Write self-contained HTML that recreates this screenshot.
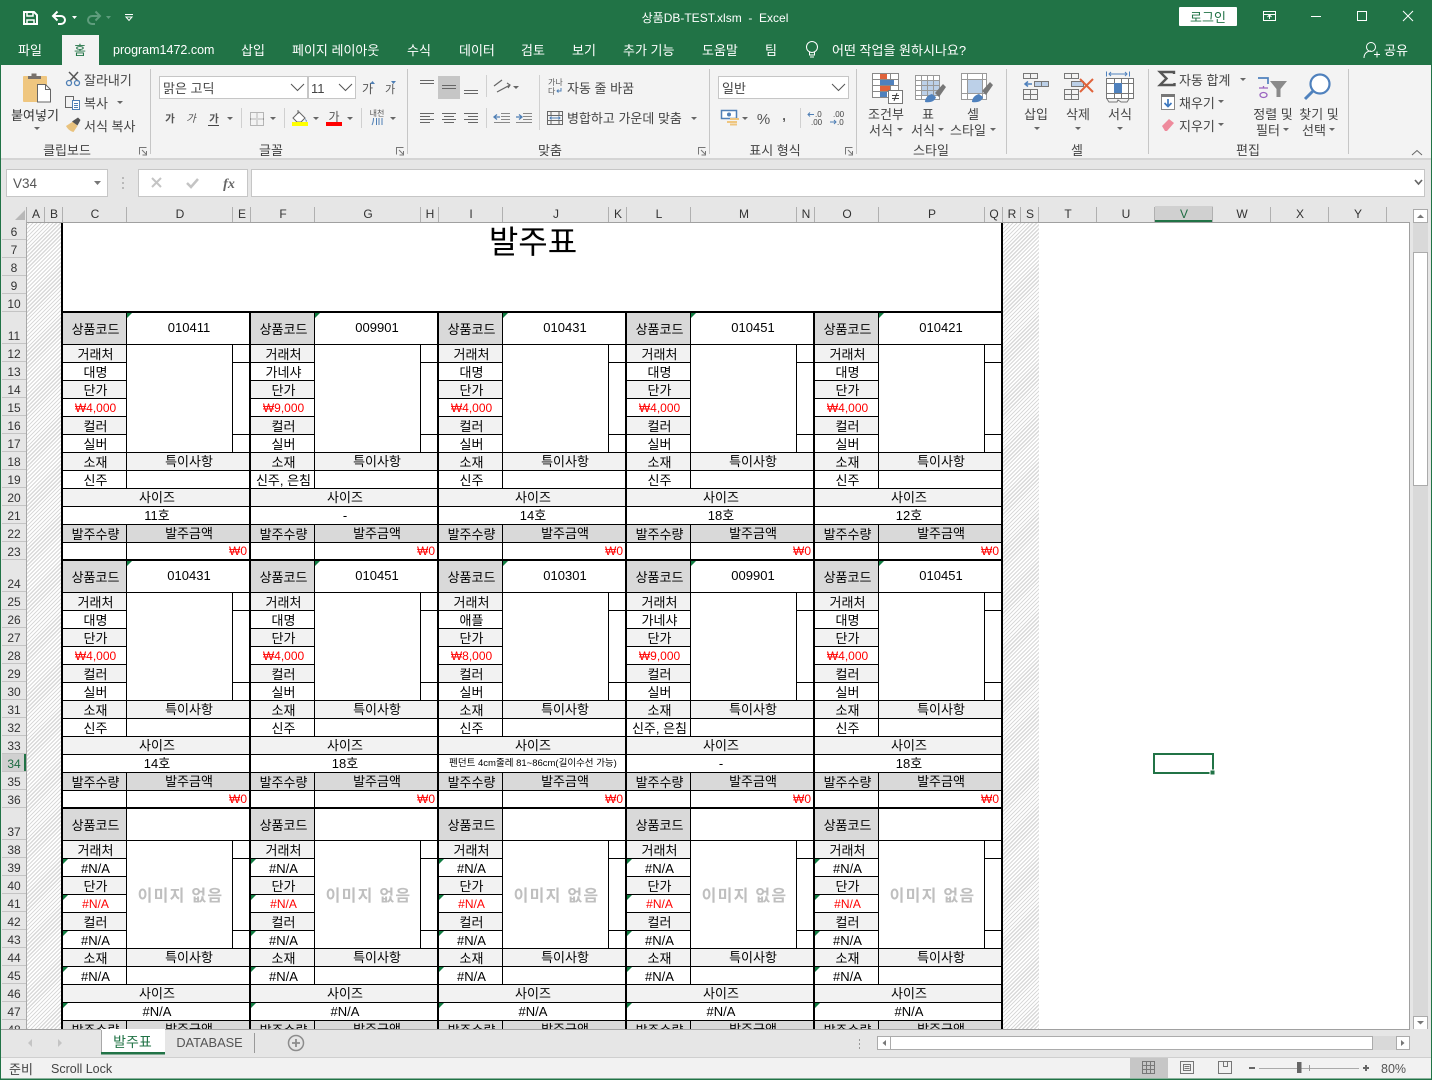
<!DOCTYPE html>
<html lang="ko"><head><meta charset="utf-8"><title>상품DB-TEST.xlsm - Excel</title>
<style>
html,body{margin:0;padding:0;width:1432px;height:1080px;overflow:hidden;background:#e6e6e6}
body,svg{font:13px "Liberation Sans","Noto Sans CJK KR",sans-serif}
#s{position:absolute;left:27px;top:222px;width:1383px;height:807px;overflow:hidden;background:#fff;color:#000}
.h{position:absolute;top:0;height:807px;background:repeating-linear-gradient(135deg,#fff 0,#fff 1.6px,#d9d9d9 1.6px,#d9d9d9 2.8px)}
.v{position:absolute;top:0;width:2px;background:#000}
#ti{position:absolute;left:386px;width:240px;top:1px;text-align:center;font-size:32px;line-height:38px}
.k{position:absolute;width:188px;height:248px;box-sizing:border-box;border-left:2px solid #000;border-top:2px solid #000;display:grid;grid-template-columns:64px 106px 16px;grid-template-rows:32px repeat(11,18px) 16px}
.k b{display:block;font-weight:normal;font-size:13px;background:#fff;border-right:1px solid #000;border-bottom:1px solid #000;text-align:center;line-height:20px;overflow:hidden;white-space:nowrap;position:relative;padding-left:2px}
.k b:nth-child(1){background:#d9d9d9;line-height:33px}
.k b:nth-child(2){grid-column:span 2;line-height:29px;border-right:0}
.k b:nth-child(3),.k b:nth-child(8),.k b:nth-child(10),.k b:nth-child(13){background:#f2f2f2}
.k b:nth-child(4){grid-row:span 6;line-height:112px;color:#bfbfbf;font-size:16px;letter-spacing:1.3px;font-weight:bold}
.k b:nth-child(5),.k b:nth-child(7),.k b:nth-child(12){border-right:0}
.k b:nth-child(7){grid-row:span 4}
.k b:nth-child(9){color:#f00;font-size:12px;line-height:18px}
.k b:nth-child(14){grid-column:span 2;background:#f2f2f2;border-right:0;line-height:18px}
.k b:nth-child(16){grid-column:span 2;border-right:0}
.k b:nth-child(17){grid-column:span 3;background:#f2f2f2;border-right:0;line-height:18px}
.k b:nth-child(18){grid-column:span 3;border-right:0;line-height:18px}
.k b:nth-child(19){background:#d9d9d9}
.k b:nth-child(20){grid-column:span 2;background:#d9d9d9;border-right:0;line-height:18px}
.k b:nth-child(21){border-bottom:0}
.k b:nth-child(22){grid-column:span 2;border:0;color:#f00;text-align:right;padding:0 2px 0 0;font-size:12px;line-height:16px}
.k b:nth-child(2)::before,.n b:nth-child(6)::before,.n b:nth-child(9)::before,.n b:nth-child(11)::before,.n b:nth-child(15)::before,.n b:nth-child(18)::before{content:"";position:absolute;left:0;top:0;border-top:5px solid #107c41;border-right:5px solid transparent}
.n b:nth-child(2)::before{display:none}
.k b.p{font-size:9.5px}
#c{position:absolute;left:0;top:0;pointer-events:none}
</style></head><body>
<div id="s">
<div class="h" style="left:0;width:34px"></div>
<div class="h" style="left:976px;width:36px"></div>
<div class="v" style="left:34px;height:91px"></div>
<div class="v" style="left:974px;height:807px"></div>
<div id="ti">발주표</div>

<div class="k" style="left:34px;top:89px"><b>상품코드</b><b>010411</b><b>거래처</b><b></b><b></b><b>대명</b><b></b><b>단가</b><b>₩4,000</b><b>컬러</b><b>실버</b><b></b><b>소재</b><b>특이사항</b><b>신주</b><b></b><b>사이즈</b><b>11호</b><b>발주수량</b><b>발주금액</b><b></b><b>₩0</b></div>
<div class="k" style="left:222px;top:89px"><b>상품코드</b><b>009901</b><b>거래처</b><b></b><b></b><b>가네샤</b><b></b><b>단가</b><b>₩9,000</b><b>컬러</b><b>실버</b><b></b><b>소재</b><b>특이사항</b><b>신주, 은침</b><b></b><b>사이즈</b><b>-</b><b>발주수량</b><b>발주금액</b><b></b><b>₩0</b></div>
<div class="k" style="left:410px;top:89px"><b>상품코드</b><b>010431</b><b>거래처</b><b></b><b></b><b>대명</b><b></b><b>단가</b><b>₩4,000</b><b>컬러</b><b>실버</b><b></b><b>소재</b><b>특이사항</b><b>신주</b><b></b><b>사이즈</b><b>14호</b><b>발주수량</b><b>발주금액</b><b></b><b>₩0</b></div>
<div class="k" style="left:598px;top:89px"><b>상품코드</b><b>010451</b><b>거래처</b><b></b><b></b><b>대명</b><b></b><b>단가</b><b>₩4,000</b><b>컬러</b><b>실버</b><b></b><b>소재</b><b>특이사항</b><b>신주</b><b></b><b>사이즈</b><b>18호</b><b>발주수량</b><b>발주금액</b><b></b><b>₩0</b></div>
<div class="k" style="left:786px;top:89px"><b>상품코드</b><b>010421</b><b>거래처</b><b></b><b></b><b>대명</b><b></b><b>단가</b><b>₩4,000</b><b>컬러</b><b>실버</b><b></b><b>소재</b><b>특이사항</b><b>신주</b><b></b><b>사이즈</b><b>12호</b><b>발주수량</b><b>발주금액</b><b></b><b>₩0</b></div>

<div class="k" style="left:34px;top:337px"><b>상품코드</b><b>010431</b><b>거래처</b><b></b><b></b><b>대명</b><b></b><b>단가</b><b>₩4,000</b><b>컬러</b><b>실버</b><b></b><b>소재</b><b>특이사항</b><b>신주</b><b></b><b>사이즈</b><b>14호</b><b>발주수량</b><b>발주금액</b><b></b><b>₩0</b></div>
<div class="k" style="left:222px;top:337px"><b>상품코드</b><b>010451</b><b>거래처</b><b></b><b></b><b>대명</b><b></b><b>단가</b><b>₩4,000</b><b>컬러</b><b>실버</b><b></b><b>소재</b><b>특이사항</b><b>신주</b><b></b><b>사이즈</b><b>18호</b><b>발주수량</b><b>발주금액</b><b></b><b>₩0</b></div>
<div class="k" style="left:410px;top:337px"><b>상품코드</b><b>010301</b><b>거래처</b><b></b><b></b><b>애플</b><b></b><b>단가</b><b>₩8,000</b><b>컬러</b><b>실버</b><b></b><b>소재</b><b>특이사항</b><b>신주</b><b></b><b>사이즈</b><b class="p">펜던트 4cm줄레 81~86cm(길이수선 가능)</b><b>발주수량</b><b>발주금액</b><b></b><b>₩0</b></div>
<div class="k" style="left:598px;top:337px"><b>상품코드</b><b>009901</b><b>거래처</b><b></b><b></b><b>가네샤</b><b></b><b>단가</b><b>₩9,000</b><b>컬러</b><b>실버</b><b></b><b>소재</b><b>특이사항</b><b>신주, 은침</b><b></b><b>사이즈</b><b>-</b><b>발주수량</b><b>발주금액</b><b></b><b>₩0</b></div>
<div class="k" style="left:786px;top:337px"><b>상품코드</b><b>010451</b><b>거래처</b><b></b><b></b><b>대명</b><b></b><b>단가</b><b>₩4,000</b><b>컬러</b><b>실버</b><b></b><b>소재</b><b>특이사항</b><b>신주</b><b></b><b>사이즈</b><b>18호</b><b>발주수량</b><b>발주금액</b><b></b><b>₩0</b></div>

<div class="k n" style="left:34px;top:585px"><b>상품코드</b><b></b><b>거래처</b><b>이미지 없음</b><b></b><b>#N/A</b><b></b><b>단가</b><b>#N/A</b><b>컬러</b><b>#N/A</b><b></b><b>소재</b><b>특이사항</b><b>#N/A</b><b></b><b>사이즈</b><b>#N/A</b><b>발주수량</b><b>발주금액</b><b></b><b>₩0</b></div>
<div class="k n" style="left:222px;top:585px"><b>상품코드</b><b></b><b>거래처</b><b>이미지 없음</b><b></b><b>#N/A</b><b></b><b>단가</b><b>#N/A</b><b>컬러</b><b>#N/A</b><b></b><b>소재</b><b>특이사항</b><b>#N/A</b><b></b><b>사이즈</b><b>#N/A</b><b>발주수량</b><b>발주금액</b><b></b><b>₩0</b></div>
<div class="k n" style="left:410px;top:585px"><b>상품코드</b><b></b><b>거래처</b><b>이미지 없음</b><b></b><b>#N/A</b><b></b><b>단가</b><b>#N/A</b><b>컬러</b><b>#N/A</b><b></b><b>소재</b><b>특이사항</b><b>#N/A</b><b></b><b>사이즈</b><b>#N/A</b><b>발주수량</b><b>발주금액</b><b></b><b>₩0</b></div>
<div class="k n" style="left:598px;top:585px"><b>상품코드</b><b></b><b>거래처</b><b>이미지 없음</b><b></b><b>#N/A</b><b></b><b>단가</b><b>#N/A</b><b>컬러</b><b>#N/A</b><b></b><b>소재</b><b>특이사항</b><b>#N/A</b><b></b><b>사이즈</b><b>#N/A</b><b>발주수량</b><b>발주금액</b><b></b><b>₩0</b></div>
<div class="k n" style="left:786px;top:585px"><b>상품코드</b><b></b><b>거래처</b><b>이미지 없음</b><b></b><b>#N/A</b><b></b><b>단가</b><b>#N/A</b><b>컬러</b><b>#N/A</b><b></b><b>소재</b><b>특이사항</b><b>#N/A</b><b></b><b>사이즈</b><b>#N/A</b><b>발주수량</b><b>발주금액</b><b></b><b>₩0</b></div>
</div>

<svg id="c" width="1432" height="1080" viewBox="0 0 1432 1080">
<defs>
<path id="ca" d="M0 0h6l-3 3z" fill="#666"/>
<g id="dl" fill="none" stroke="#777"><path d="M.5 7.5v-7h7"/><path d="M3 3l4 4M7.5 4v4h-4"/></g>
</defs>

<!-- chrome backgrounds -->
<rect x="0" y="0" width="1432" height="65" fill="#217346"/>
<rect x="0" y="65" width="1432" height="93" fill="#f3f3f3"/>
<rect x="0" y="158" width="1432" height="2" fill="#d4d4d4"/>
<rect x="0" y="160" width="1432" height="62" fill="#e6e6e6"/>
<rect x="0" y="222" width="27" height="807" fill="#e6e6e6"/>
<rect x="1410" y="222" width="22" height="807" fill="#e6e6e6"/>

<!-- title bar -->
<g fill="none" stroke="#fff" stroke-width="2">
<path d="M24 12h10l3 3v9H24z"/><path d="M27 12v4h6v-4M27 24v-4h7v4" stroke-width="1.500"/>
<path d="M53 16h8a4 4 0 0 1 0 8h-3"/><path d="M57.500 11.500l-4.500 4.500 4.500 4.500"/>
<g stroke="#5f9d7d"><path d="M100 16h-8a4 4 0 0 0 0 8h3"/><path d="M95.500 11.500l4.500 4.500-4.500 4.500"/></g>
</g>
<path d="M72 16h5l-2.500 3z" fill="#fff"/>
<path d="M106 16h5l-2.500 3z" fill="#5f9d7d"/>
<path d="M125 14.500h8M126 17h6l-3 3.500z" fill="none" stroke="#fff"/>
<text x="715" y="22" text-anchor="middle" fill="#fff" font-size="12">상품DB-TEST.xlsm&#160; -&#160; Excel</text>
<rect x="1179" y="7" width="58" height="19" rx="1" fill="#fff"/>
<text x="1208" y="22" text-anchor="middle" fill="#217346">로그인</text>
<g fill="none" stroke="#fff">
<rect x="1263.500" y="11.500" width="12" height="9"/><path d="M1263 14.500h13M1269.500 19v-3.500M1267.500 17l2-2 2 2"/>
<path d="M1311 16.500h10"/><rect x="1357.500" y="11.500" width="9" height="9"/>
<path d="M1403 11l10 10M1413 11l-10 10"/>
<circle cx="812" cy="47" r="5.500"/><path d="M809.500 52v3h5v-3M810 57h4"/>
<circle cx="1371" cy="47" r="4.500"/><path d="M1364 58c0-4.500 3-7 7-7M1374 54.500h6M1377 51.500v6"/>
</g>

<!-- tabs -->
<rect x="62" y="35" width="37" height="30" fill="#f3f3f3"/>
<g fill="#fff">
<text x="18" y="55">파일</text>
<text x="113" y="54" font-size="12.500">program1472.com</text>
<text x="241" y="55">삽입</text>
<text x="292" y="55">페이지 레이아웃</text>
<text x="407" y="55">수식</text>
<text x="459" y="55">데이터</text>
<text x="521" y="55">검토</text>
<text x="572" y="55">보기</text>
<text x="623" y="55">추가 기능</text>
<text x="702" y="55">도움말</text>
<text x="765" y="55">팀</text>
<text x="832" y="55">어떤 작업을 원하시나요?</text>
<text x="1384" y="55">공유</text>
</g>
<text x="80" y="55" text-anchor="middle" fill="#217346">홈</text>

<!-- ribbon separators -->
<path d="M150.500 69v85M407.500 69v85M709.500 69v85M856.500 69v85M1006.500 69v85M1148.500 69v85M1348.500 69v85" stroke="#c6c6c6"/>
<path d="M241.500 108v20M284.500 108v20M361.500 108v20M486.500 75v22M486.500 108v20M539.500 75v55M800.500 108v20" stroke="#d0d0d0"/>

<!-- group labels -->
<g fill="#444" text-anchor="middle">
<text x="67" y="155">클립보드</text><text x="271" y="155">글꼴</text><text x="550" y="155">맞춤</text>
<text x="775" y="155">표시 형식</text><text x="931" y="155">스타일</text><text x="1077" y="155">셀</text><text x="1248" y="155">편집</text>
</g>
<use href="#dl" x="139" y="147"/><use href="#dl" x="396" y="147"/><use href="#dl" x="698" y="147"/><use href="#dl" x="845" y="147"/>
<path d="M1412 155l5-4.500 5 4.500" fill="none" stroke="#666"/>

<!-- clipboard -->
<rect x="23" y="76" width="24" height="26" rx="1" fill="#efc67f"/>
<path d="M28 79v-3h3.500v-2.500h5V76H41v3z" fill="#77706a"/>
<path d="M37.500 84.500h8l5 5v12.500h-13z" fill="#fff" stroke="#666"/><path d="M45.500 84.500v5h5" fill="none" stroke="#666"/>
<text x="35" y="120" text-anchor="middle" fill="#333">붙여넣기</text>
<use href="#ca" x="34" y="127"/>
<g fill="none"><path d="M70 81l8-9M78 81l-9-9" stroke="#555" stroke-width="1.500"/><circle cx="69" cy="83" r="2.500" stroke="#4f7fb5" stroke-width="1.300"/><circle cx="77" cy="83" r="2.500" stroke="#4f7fb5" stroke-width="1.300"/>
<path d="M65.500 96.500h8v11h-8z" stroke="#666"/><path d="M72.500 100.500h7v9h-7z" fill="#fff" stroke="#4f7fb5"/><path d="M74 103.500h4M74 105.500h4M74 107.500h4" stroke="#4f7fb5"/></g>
<path d="M66 126l7-4.500 4.500 4.500-4 6c-3-.5-6-3-7.500-6z" fill="#e9c27d"/><path d="M72 121.500l6-4 2.500 2.500-3 5.500z" fill="#555"/>
<g fill="#444">
<text x="84" y="85">잘라내기</text><text x="84" y="108">복사</text><text x="84" y="131">서식 복사</text>
</g>
<use href="#ca" x="117" y="101"/>

<!-- font -->
<g fill="#fff" stroke="#c6c6c6"><rect x="159.500" y="76.500" width="148" height="22"/><rect x="308.500" y="76.500" width="47" height="22"/></g>
<text x="163" y="93" fill="#444">맑은 고딕</text><text x="311" y="93" fill="#444">11</text>
<path d="M291 84l6.500 6.500 6.500-6.500M339 84l6.500 6.500 6.500-6.500" fill="none" stroke="#555"/>
<g fill="#555"><text x="362" y="93" font-size="12">가</text><text x="385" y="93" font-size="11">가</text>
<text x="170" y="122" text-anchor="middle" font-weight="bold" font-size="10.500">가</text>
<text x="191" y="122" text-anchor="middle" font-style="italic" font-size="10.500">가</text>
<text x="214" y="122" text-anchor="middle" font-weight="bold" font-size="10.500">가</text>
<text x="334" y="121" text-anchor="middle" font-size="12">가</text></g>
<path d="M370 84l2.500-3 2.500 3zM391 81h5l-2.500 3z" fill="#4f7fb5"/>
<path d="M208 125.500h11" stroke="#444"/>
<use href="#ca" x="227" y="117"/><use href="#ca" x="270" y="117"/><use href="#ca" x="313" y="117"/><use href="#ca" x="347" y="117"/><use href="#ca" x="390" y="117"/>
<path d="M250.500 112.500h13v13h-13zM257 112.500v13M250.500 119h13" fill="none" stroke="#777" stroke-dasharray="1 1"/>
<path d="M293 118l6-6 6 6-4 4h-4zM298 110v4" fill="#fff" stroke="#666"/><path d="M305 118l2 3-1 1z" fill="#4f7fb5"/>
<rect x="292" y="122" width="16" height="4" fill="#ff0"/>
<rect x="326" y="122" width="16" height="4" fill="#f00"/>
<text x="377" y="116" text-anchor="middle" font-size="8" fill="#555">내천</text>
<path d="M376.500 118v7M379 118v7M373.500 118c0 3-.5 5-1.500 7M382 118v7" fill="none" stroke="#4f7fb5"/>

<!-- alignment -->
<rect x="438" y="76" width="22" height="23" fill="#c6c6c6"/>
<path d="M420 80.500h14M420 83.500h14M442 85.500h14M442 88.500h14M464 90.500h14M464 93.500h14M420 113.500h14M420 116.500h10M420 119.500h14M420 122.500h10M442 113.500h14M444 116.500h10M442 119.500h14M444 122.500h10M464 113.500h14M468 116.500h10M464 119.500h14M468 122.500h10" stroke="#666"/>
<path d="M501 113.500h9M501 116.500h9M501 119.500h9M494 122.500h16M523 113.500h9M523 116.500h9M523 119.500h9M516 122.500h16" stroke="#888"/>
<path d="M494 117h6M497 114.500l-3 2.500 3 2.500M516 117h6M519 114.500l3 2.500-3 2.500" fill="none" stroke="#4f7fb5" stroke-width="1.300"/>
<path d="M494 86l8-6M497 92l13-7M507 83l3 2-2 3" fill="none" stroke="#666" stroke-width="1.200"/>
<use href="#ca" x="513" y="86"/>
<text x="548" y="85" font-size="8" fill="#555">가나</text><text x="548" y="94" font-size="8" fill="#555">다</text>
<path d="M561 88v3h-4M558.500 89.500l-1.500 1.500 1.500 1.500" fill="none" stroke="#4f7fb5"/>
<text x="567" y="93" fill="#444">자동 줄 바꿈</text>
<path d="M547.500 111.500h15v13h-15zM547.500 115.500h15M547.500 120.500h15M551 111.500v4M559 111.500v4M551 120.500v4M559 120.500v4" fill="none" stroke="#666"/>
<path d="M550 118h10M551.500 116.500l-1.500 1.500 1.500 1.500M558.500 116.500l1.500 1.500-1.500 1.500" fill="none" stroke="#4f7fb5"/>
<text x="567" y="123" fill="#444">병합하고 가운데 맞춤</text>
<use href="#ca" x="691" y="117"/>

<!-- number -->
<rect x="718.500" y="76.500" width="130" height="22" fill="#fff" stroke="#c6c6c6"/>
<text x="722" y="93" fill="#444">일반</text>
<path d="M832 84l6.500 6.500 6.500-6.500" fill="none" stroke="#555"/>
<rect x="721.500" y="110.500" width="15" height="8" fill="#fff" stroke="#4f7fb5" stroke-width="1.500"/><circle cx="729" cy="114.500" r="2" fill="#4f7fb5"/>
<path d="M730 118h9v2h-9zM727 121h10v2h-10zM730 123.500h7v2h-7z" fill="#efc67f"/>
<use href="#ca" x="742" y="117"/>
<text x="763.500" y="124" text-anchor="middle" font-size="15" fill="#555">%</text>
<text x="784" y="120" text-anchor="middle" font-weight="bold" font-size="13" fill="#555">,</text>
<g font-size="8" fill="#444"><text x="815" y="117">.0</text><text x="811" y="125">.00</text><text x="833" y="117">.00</text><text x="837" y="125">.0</text></g>
<path d="M808 114.500h6M810 112.500l-2 2 2 2M830 122h6M834 120l2 2-2 2" fill="none" stroke="#4f7fb5"/>

<!-- styles -->
<g fill="none" stroke="#888">
<rect x="872.500" y="73.500" width="26" height="24" fill="#fff"/><path d="M872.500 79.500h26M872.500 85.500h26M872.500 91.500h26M881.500 73.500v24M890.500 73.500v24"/>
</g>
<path d="M880 74h7v5h-7zM880 86h10v5h-10z" fill="#e0633b"/>
<path d="M880 80h14v5h-14zM880 92h7v5h-7z" fill="#4f81bd"/>
<rect x="888.500" y="90.500" width="14" height="13" fill="#fff" stroke="#777"/>
<path d="M892 95.500h7M892 98.500h7M897 93l-3 8" fill="none" stroke="#444"/>
<g fill="none" stroke="#999">
<rect x="915.500" y="75.500" width="24" height="24" fill="#fff"/><rect x="921" y="80" width="18" height="15" fill="#bcd0e8" stroke="none"/><path d="M915.500 80.500h24M915.500 85.500h24M915.500 90.500h24M915.500 95.500h24M921.500 75.500v24M927.500 75.500v24M933.500 75.500v24"/>
<rect x="961.500" y="73.500" width="25" height="26" fill="#fff"/><rect x="967" y="79" width="15" height="14" fill="#bcd0e8" stroke="none"/><path d="M961.500 79.500h25M961.500 93.500h25M967.500 73.500v26M982.500 73.500v26"/>
</g>
<path d="M935 93l8-9 3 3-7 10zM982 91l8-9 3 3-7 10z" fill="#777"/>
<path d="M925 102c0-4 3-7 7-8l4 3c-1 4-5 6-11 5zM972 102c0-4 3-7 7-8l4 3c-1 4-5 6-11 5z" fill="#4f81bd"/>
<g text-anchor="middle" fill="#444">
<text x="886" y="119">조건부</text><text x="881" y="135">서식</text>
<text x="928" y="119">표</text><text x="923" y="135">서식</text>
<text x="973" y="119">셀</text><text x="968" y="135">스타일</text>
<text x="1036" y="119">삽입</text><text x="1078" y="119">삭제</text><text x="1120" y="119">서식</text>
</g>
<use href="#ca" x="897" y="128"/><use href="#ca" x="938" y="128"/><use href="#ca" x="990" y="128"/>
<use href="#ca" x="1034" y="127"/><use href="#ca" x="1075" y="127"/><use href="#ca" x="1117" y="127"/>

<!-- cells icons -->
<g fill="none" stroke="#777">
<path d="M1023.500 73.500h14v5h-14zM1030.500 73.500v5M1023.500 89.500h14v10h-14zM1023.500 94.500h14M1030.500 89.500v10"/>
<path d="M1034.500 81.500h14v5h-14zM1041.500 81.500v5" fill="#bcd0e8"/>
<path d="M1064.500 73.500h14v5h-14zM1071.500 73.500v5M1064.500 89.500h14v10h-14zM1064.500 94.500h14M1071.500 89.500v10"/>
<path d="M1071.500 81.500h12v5h-12z" fill="#bcd0e8"/>
<rect x="1106.500" y="78.500" width="27" height="20" fill="#fff"/><path d="M1106.500 83.500h27M1106.500 93.500h27M1114.500 78.500v20M1121.500 78.500v20M1128.500 78.500v20"/>
<path d="M1107 99l2 3h8l1-2 3 2h6l2-3"/>
</g>
<rect x="1114" y="83" width="8" height="10" fill="#4f81bd"/>
<path d="M1032 84h-7M1028 81.500l-3 2.500 3 2.500" fill="none" stroke="#4f81bd" stroke-width="1.500"/>
<path d="M1080 79l13 13M1093 79l-13 13" fill="none" stroke="#e0633b" stroke-width="2"/>
<path d="M1106.500 71.500v5M1129.500 71.500v5M1109 74h18M1111 72l-2 2 2 2M1125 72l2 2-2 2" fill="none" stroke="#4f81bd"/>

<!-- editing -->
<path d="M1174 74v-2h-14l6.500 6.500-6.500 6.500h14.500v-2" fill="none" stroke="#555" stroke-width="2.400"/>
<rect x="1161.500" y="94.500" width="13" height="15" fill="#fff" stroke="#888"/><rect x="1161" y="94" width="14" height="3" fill="#777"/>
<path d="M1168 99v7M1164.500 103l3.500 3.500 3.500-3.500" fill="none" stroke="#3d78bf" stroke-width="1.700"/>
<path d="M1162 126l7-7 5 4-7 8h-2z" fill="#ee8a9c"/>
<g fill="#444"><text x="1179" y="85">자동 합계</text><text x="1179" y="108">채우기</text><text x="1179" y="131">지우기</text></g>
<use href="#ca" x="1240" y="78"/><use href="#ca" x="1218" y="100"/><use href="#ca" x="1218" y="123"/>
<path d="M1258 78h10v6" fill="none" stroke="#4f81bd" stroke-width="1.700"/>
<path d="M1259 88h9M1263.500 86v2M1260 95a3.500 2.500 0 1 0 7 0a3.500 2.500 0 1 0-7 0" fill="none" stroke="#9a65c0" stroke-width="1.300"/>
<path d="M1270 81h17l-6.500 8v8h-4v-8z" fill="#8a8a8a"/>
<circle cx="1320" cy="84" r="9.500" fill="#fff" stroke="#4f81bd" stroke-width="2.200"/>
<path d="M1313 91l-8 8" stroke="#4f81bd" stroke-width="3"/>
<g text-anchor="middle" fill="#444"><text x="1273" y="119">정렬 및</text><text x="1268" y="135">필터</text><text x="1319" y="119">찾기 및</text><text x="1314" y="135">선택</text></g>
<use href="#ca" x="1283" y="128"/><use href="#ca" x="1329" y="128"/>

<!-- formula bar -->
<g fill="#fff" stroke="#c6c6c6"><rect x="6.500" y="169.500" width="101" height="27"/><rect x="138.500" y="169.500" width="109" height="27"/><rect x="251.500" y="169.500" width="1173" height="27"/></g>
<text x="13" y="188" font-size="13.500" fill="#555">V34</text>
<path d="M94 181h7l-3.500 4z" fill="#777"/>
<path d="M123 177v2M123 182v2M123 187v2" stroke="#aaa" stroke-width="1.500"/>
<path d="M152 178l9 9M161 178l-9 9" stroke="#c4c4c4" stroke-width="2"/>
<path d="M187 183l4 4 7-8" fill="none" stroke="#c4c4c4" stroke-width="2.500"/>
<text x="229" y="188" text-anchor="middle" font-family="Liberation Serif" font-style="italic" font-weight="bold" font-size="14" fill="#666">fx</text>
<path d="M1415 180l3.500 4 3.500-4" fill="none" stroke="#666" stroke-width="1.700"/>

<!-- column headers -->
<path d="M15 220h10v-10z" fill="#b8b8b8"/>
<rect x="1155" y="206" width="58" height="14" fill="#d0d0d0"/>
<rect x="1155" y="220" width="58" height="2" fill="#217346"/>
<path d="M26.500 207v15M44.500 207v15M62.500 207v15M126.500 207v15M232.500 207v15M250.500 207v15M314.500 207v15M420.500 207v15M438.500 207v15M502.500 207v15M608.500 207v15M626.500 207v15M690.500 207v15M796.500 207v15M814.500 207v15M878.500 207v15M984.500 207v15M1002.500 207v15M1020.500 207v15M1038.500 207v15M1096.500 207v15M1154.500 207v15M1212.500 207v15M1270.500 207v15M1328.500 207v15M1386.500 207v15" stroke="#b0b0b0"/>
<rect x="27" y="222" width="1383" height="1" fill="#a0a0a0"/>
<g text-anchor="middle" fill="#333" font-size="12">
<text x="36" y="218">A</text><text x="54" y="218">B</text><text x="95" y="218">C</text><text x="180" y="218">D</text><text x="242" y="218">E</text><text x="283" y="218">F</text><text x="368" y="218">G</text><text x="430" y="218">H</text><text x="471" y="218">I</text><text x="556" y="218">J</text><text x="618" y="218">K</text><text x="659" y="218">L</text><text x="744" y="218">M</text><text x="806" y="218">N</text><text x="847" y="218">O</text><text x="932" y="218">P</text><text x="994" y="218">Q</text><text x="1012" y="218">R</text><text x="1030" y="218">S</text><text x="1068" y="218">T</text><text x="1126" y="218">U</text><text x="1184" y="218" fill="#1d6b41">V</text><text x="1242" y="218">W</text><text x="1300" y="218">X</text><text x="1358" y="218">Y</text>
</g>

<!-- row headers -->
<rect x="2" y="754" width="24" height="18" fill="#d0d0d0"/>
<rect x="24" y="754" width="2" height="18" fill="#217346"/>
<path d="M2 239.500h24M2 257.500h24M2 275.500h24M2 293.500h24M2 311.500h24M2 343.500h24M2 361.500h24M2 379.500h24M2 397.500h24M2 415.500h24M2 433.500h24M2 451.500h24M2 469.500h24M2 487.500h24M2 505.500h24M2 523.500h24M2 541.500h24M2 559.500h24M2 591.500h24M2 609.500h24M2 627.500h24M2 645.500h24M2 663.500h24M2 681.500h24M2 699.500h24M2 717.500h24M2 735.500h24M2 753.500h24M2 771.500h24M2 789.500h24M2 807.500h24M2 839.500h24M2 857.500h24M2 875.500h24M2 893.500h24M2 911.500h24M2 929.500h24M2 947.500h24M2 965.500h24M2 983.500h24M2 1001.500h24M2 1019.500h24" stroke="#c4c4c4"/>
<path d="M26.500 222v807" stroke="#a8a8a8"/>
<g text-anchor="middle" fill="#333" font-size="12">
<text x="14" y="236">6</text><text x="14" y="254">7</text><text x="14" y="272">8</text><text x="14" y="290">9</text><text x="14" y="308">10</text><text x="14" y="340">11</text><text x="14" y="358">12</text><text x="14" y="376">13</text><text x="14" y="394">14</text><text x="14" y="412">15</text><text x="14" y="430">16</text><text x="14" y="448">17</text><text x="14" y="466">18</text><text x="14" y="484">19</text><text x="14" y="502">20</text><text x="14" y="520">21</text><text x="14" y="538">22</text><text x="14" y="556">23</text><text x="14" y="588">24</text><text x="14" y="606">25</text><text x="14" y="624">26</text><text x="14" y="642">27</text><text x="14" y="660">28</text><text x="14" y="678">29</text><text x="14" y="696">30</text><text x="14" y="714">31</text><text x="14" y="732">32</text><text x="14" y="750">33</text><text x="14" y="768" fill="#1d6b41">34</text><text x="14" y="786">35</text><text x="14" y="804">36</text><text x="14" y="836">37</text><text x="14" y="854">38</text><text x="14" y="872">39</text><text x="14" y="890">40</text><text x="14" y="908">41</text><text x="14" y="926">42</text><text x="14" y="944">43</text><text x="14" y="962">44</text><text x="14" y="980">45</text><text x="14" y="998">46</text><text x="14" y="1016">47</text><text x="14" y="1034">48</text>
</g>

<!-- selection -->
<rect x="1154" y="754" width="59" height="19" fill="none" stroke="#217346" stroke-width="2"/>
<rect x="1210" y="770" width="5" height="5" fill="#217346" stroke="#fff"/>

<!-- vertical scrollbar -->
<rect x="1409" y="222" width="1" height="808" fill="#a0a0a0"/>
<rect x="1413" y="209" width="15" height="820" fill="#d9d9d9"/>
<rect x="1413.500" y="209.500" width="14" height="13" fill="#fff" stroke="#ababab"/>
<path d="M1417 218h7l-3.500-3.500z" fill="#777"/>
<rect x="1413.500" y="252.500" width="14" height="233" fill="#fff" stroke="#ababab"/>
<rect x="1413.500" y="1016.500" width="14" height="13" fill="#fff" stroke="#ababab"/>
<path d="M1417 1021h7l-3.500 3.500z" fill="#777"/>

<!-- sheet tabs -->
<rect x="0" y="1029" width="1432" height="29" fill="#e6e6e6"/>
<rect x="0" y="1029" width="1410" height="1" fill="#a0a0a0"/>
<rect x="101" y="1029" width="64" height="25" fill="#fff"/>
<path d="M101.500 1030v24" stroke="#a8a8a8"/>
<rect x="101" y="1052" width="64" height="2.500" fill="#217346"/>
<text x="132.500" y="1047" text-anchor="middle" font-size="14" fill="#217346">발주표</text>
<text x="209.500" y="1047" text-anchor="middle" font-size="12.800" fill="#555">DATABASE</text>
<path d="M254.500 1033v20" stroke="#999"/>
<circle cx="296" cy="1043" r="7.500" fill="none" stroke="#8c8c8c" stroke-width="1.500"/>
<path d="M292 1043h8M296 1039v8" stroke="#8c8c8c" stroke-width="1.800"/>
<path d="M32 1039l-4 4 4 4zM58 1039l4 4-4 4z" fill="#c4c4c4"/>
<path d="M859.500 1039v2M859.500 1043v2M859.500 1047v2" stroke="#999"/>
<rect x="877.500" y="1036.500" width="13" height="13" fill="#fff" stroke="#ababab"/>
<path d="M886 1040v6l-3.500-3z" fill="#777"/>
<rect x="890.500" y="1036.500" width="482" height="13" fill="#fff" stroke="#ababab"/>
<rect x="1373" y="1036" width="23" height="14" fill="#d9d9d9"/>
<rect x="1396.500" y="1036.500" width="13" height="13" fill="#fff" stroke="#ababab"/>
<path d="M1401 1040v6l3.500-3z" fill="#777"/>

<!-- status bar -->
<rect x="0" y="1057" width="1432" height="1" fill="#cfcfcf"/>
<rect x="0" y="1058" width="1432" height="21" fill="#f2f2f2"/>
<text x="9" y="1074" fill="#444">준비</text>
<text x="51" y="1073" font-size="12.500" fill="#444">Scroll Lock</text>
<rect x="1130" y="1058" width="38" height="20" fill="#c6c6c6"/>
<path d="M1142.500 1061.500h12v12h-12zM1142.500 1065.500h12M1142.500 1069.500h12M1146.500 1061.500v12M1150.500 1061.500v12" fill="none" stroke="#777"/>
<path d="M1180.500 1061.500h13v12h-13zM1183.500 1064.500h7v6h-7zM1184.500 1066.500h5M1184.500 1068.500h5" fill="none" stroke="#777"/>
<path d="M1218.500 1061.500h13v12h-13zM1223.500 1061.500v5h4v-5" fill="none" stroke="#777"/>
<path d="M1249 1068h6M1363 1068h6M1366 1065v6" stroke="#666" stroke-width="2"/>
<path d="M1259 1068.500h100" stroke="#aaa"/>
<path d="M1309.500 1065v6" stroke="#999"/>
<rect x="1297" y="1062" width="4.500" height="11" fill="#666"/>
<text x="1381" y="1073" font-size="12.500" fill="#555">80%</text>

<!-- window border -->
<rect x="0" y="65" width="1" height="1015" fill="#217346"/>
<rect x="1431" y="65" width="1" height="1015" fill="#217346"/>
<rect x="0" y="1078.500" width="1432" height="1.500" fill="#217346"/>
</svg>
</body></html>
